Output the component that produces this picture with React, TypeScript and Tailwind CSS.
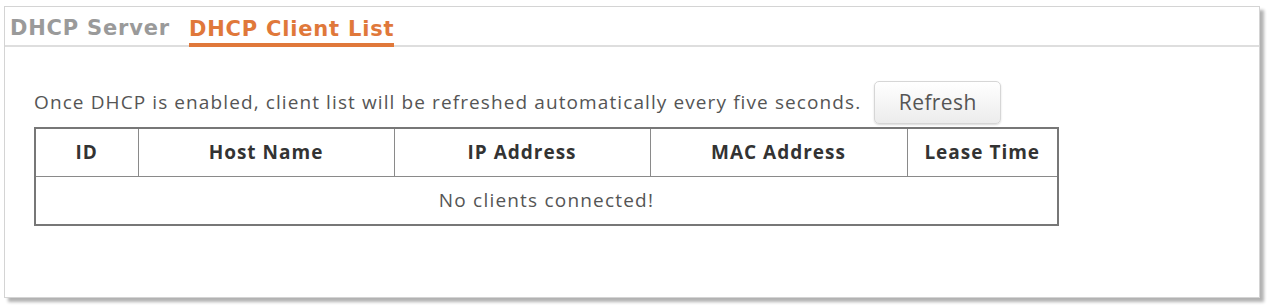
import React from 'react';

const columns = [
  { label: 'ID', width: 'w-[103px]' },
  { label: 'Host Name', width: 'w-[256px]' },
  { label: 'IP Address', width: 'w-[256px]' },
  { label: 'MAC Address', width: 'w-[257px]' },
  { label: 'Lease Time', width: 'w-[151px]' },
];

export default function App() {
  return (
    <div className="w-[1268px] h-[306px] bg-white pt-[6px] pl-[4px]">
      {/* Panel */}
      <div className="w-[1256px] h-[292px] bg-white border border-[#d4d4d4] shadow-[4px_4px_3px_rgba(0,0,0,0.3)] flex flex-col">
        {/* Tabs */}
        <div className="h-[40px] border-b-2 border-[#dedede] flex items-end gap-[19px] pl-[5px] font-['DejaVu_Sans',sans-serif] font-bold text-[21px] tracking-[0.8px]">
          <span className="text-[#9a9a9a] pb-[6px] leading-none">DHCP Server</span>
          <span className="text-[#e0783a] leading-none pb-[3px] border-b-[4px] border-[#e0783a] mb-[-2px]">
            DHCP Client List
          </span>
        </div>

        {/* Content */}
        <div className="pl-[29px] pt-[34px] font-['Open_Sans',sans-serif]">
          <div className="flex items-center gap-[13px]">
            <span className="text-[19px] tracking-[1.1px] text-[#555]">
              Once DHCP is enabled, client list will be refreshed automatically every five seconds.
            </span>
            <button className="w-[127px] h-[43px] rounded-[5px] border border-[#d6d6d6] bg-gradient-to-b from-white to-[#ececec] shadow-[0_1px_2px_rgba(0,0,0,0.15)] text-[21px] tracking-[0.4px] text-[#555]">
              Refresh
            </button>
          </div>

          <table className="mt-[3px] w-[1023px] border-collapse border-2 border-[#777] table-fixed">
            <thead>
              <tr className="h-[48px]">
                {columns.map((c) => (
                  <th
                    key={c.label}
                    className={`${c.width} border border-[#8a8a8a] text-[19px] tracking-[1px] font-bold text-[#333] text-center`}
                  >
                    {c.label}
                  </th>
                ))}
              </tr>
            </thead>
            <tbody>
              <tr className="h-[49px]">
                <td colSpan={5} className="text-center text-[19px] tracking-[1.2px] text-[#555]">
                  No clients connected!
                </td>
              </tr>
            </tbody>
          </table>
        </div>
      </div>
    </div>
  );
}
